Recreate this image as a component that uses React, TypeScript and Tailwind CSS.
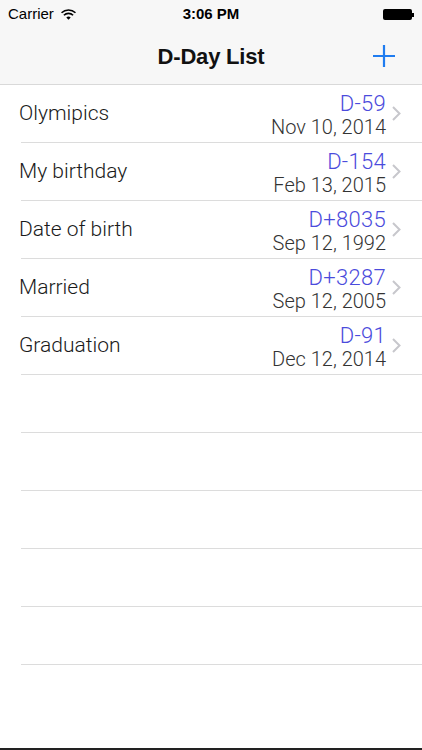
const events = [
  { title: "Olymipics", dday: "D-59", date: "Nov 10, 2014" },
  { title: "My birthday", dday: "D-154", date: "Feb 13, 2015" },
  { title: "Date of birth", dday: "D+8035", date: "Sep 12, 1992" },
  { title: "Married", dday: "D+3287", date: "Sep 12, 2005" },
  { title: "Graduation", dday: "D-91", date: "Dec 12, 2014" },
];

const font = { fontFamily: '"Liberation Sans", Arial, sans-serif' };
const light = { fontFamily: 'Roboto, "Liberation Sans", sans-serif' };

export default function App() {
  return (
    <div className="relative flex h-[750px] w-[422px] flex-col overflow-hidden bg-white" style={font}>
      <StatusBar />
      <div className="relative flex h-[57px] items-center justify-center border-b border-[#d9d9d9] bg-[#f7f7f7]">
        <span className="text-[22px] font-bold tracking-[-0.2px] text-[#111]">D-Day List</span>
        <svg className="absolute right-[26px] top-[16px]" width="24" height="24" viewBox="0 0 24 24">
          <path d="M12 1v22M1 12h22" stroke="#1f7cf0" strokeWidth="2.2" />
        </svg>
      </div>

      <div className="flex flex-col" style={light}>
        {events.map((e) => (
          <Row key={e.title} {...e} />
        ))}
        {[0, 1, 2, 3, 4].map((i) => (
          <div key={i} className="ml-[21px] h-[58px] border-b border-[#dcdcdc]" />
        ))}
      </div>
      <div className="absolute bottom-0 left-0 h-[2px] w-full bg-[#222]" />
    </div>
  );
}

function Row({ title, dday, date }: { title: string; dday: string; date: string }) {
  return (
    <div className="ml-[21px] flex h-[58px] items-center border-b border-[#dcdcdc] pr-[21px]">
      <span className="-ml-[2px] mt-[1px] flex-1 text-[21px] font-light text-[#1a1a1a]">{title}</span>
      <div className="mt-[2px] flex flex-col items-end font-light leading-none">
        <span className="text-[22px] tracking-[0.3px] text-[#4b4bdc]">{dday}</span>
        <span className="mt-[2px] text-[20px] text-[#333]">{date}</span>
      </div>
      <svg className="ml-[6px] mt-[-1px]" width="9" height="15" viewBox="0 0 9 15">
        <path d="M1 1l6.5 6.5L1 14" stroke="#c7c7cc" strokeWidth="2" fill="none" />
      </svg>
    </div>
  );
}

function StatusBar() {
  return (
    <div className="relative flex h-[28px] items-center bg-[#f7f7f7] px-[8px] text-[15px] text-black">
      <span>Carrier</span>
      <svg className="ml-[7px]" width="15" height="11" viewBox="0 0 15 11">
        <path d="M0.5 3.8a10 10 0 0 1 14 0" stroke="#000" strokeWidth="1.6" fill="none" />
        <path d="M2.9 6.2a6.6 6.6 0 0 1 9.2 0" stroke="#000" strokeWidth="1.6" fill="none" />
        <path d="M5.3 8.6a3.2 3.2 0 0 1 4.4 0L7.5 10.8z" fill="#000" />
      </svg>
      <span className="absolute left-1/2 -translate-x-1/2 font-bold">3:06 PM</span>
      <div className="absolute right-[8px] top-[9px] flex items-center">
        <div className="h-[11px] w-[29px] rounded-[2px] bg-black" />
        <div className="h-[4px] w-[2px] bg-black" />
      </div>
    </div>
  );
}
